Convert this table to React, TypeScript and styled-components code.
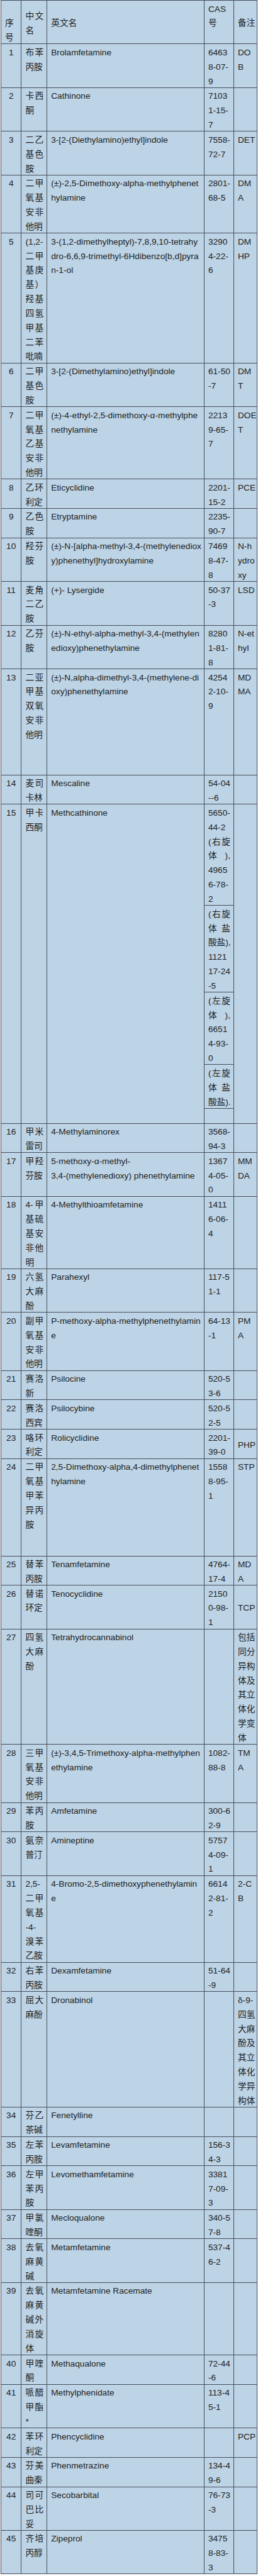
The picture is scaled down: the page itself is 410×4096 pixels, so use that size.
import React from 'react';
import styled, { createGlobalStyle } from 'styled-components';

const LINE = 22.83;

type Lines = string[];

interface IDrug {
  no: string;
  cn: Lines;
  en: Lines;
  cas?: Lines;
  casGroups?: Lines[];
  note?: Lines;
  noteMiddle?: boolean;
  casMiddle?: boolean;
  height?: number;
}

const drugs: IDrug[] = [
  { no: '1', cn: ['布苯', '丙胺'], en: ['Brolamfetamine'], cas: ['6463', '8-07-', '9'], note: ['DO', 'B'] },
  { no: '2', cn: ['卡西', '酮'], en: ['Cathinone'], cas: ['7103', '1-15-', '7'] },
  { no: '3', cn: ['二乙', '基色', '胺'], en: ['3-[2-(Diethylamino)ethyl]indole'], cas: ['7558-', '72-7'], note: ['DET'] },
  {
    no: '4',
    cn: ['二甲', '氧基', '安非', '他明'],
    en: ['(±)-2,5-Dimethoxy-alpha-methylphenet', 'hylamine'],
    cas: ['2801-', '68-5'],
    note: ['DM', 'A'],
  },
  {
    no: '5',
    cn: ['(1,2-', '二甲', '基庚', '基）', '羟基', '四氢', '甲基', '二苯', '吡喃'],
    en: ['3-(1,2-dimethylheptyl)-7,8,9,10-tetrahy', 'dro-6,6,9-trimethyl-6Hdibenzo[b,d]pyra', 'n-1-ol'],
    cas: ['3290', '4-22-', '6'],
    note: ['DM', 'HP'],
  },
  { no: '6', cn: ['二甲', '基色', '胺'], en: ['3-[2-(Dimethylamino)ethyl]indole'], cas: ['61-50', '-7'], note: ['DM', 'T'] },
  {
    no: '7',
    cn: ['二甲', '氧基', '乙基', '安非', '他明'],
    en: ['(±)-4-ethyl-2,5-dimethoxy-α-methylphe', 'nethylamine'],
    cas: ['2213', '9-65-', '7'],
    note: ['DOE', 'T'],
  },
  { no: '8', cn: ['乙环', '利定'], en: ['Eticyclidine'], cas: ['2201-', '15-2'], note: ['PCE'] },
  { no: '9', cn: ['乙色', '胺'], en: ['Etryptamine'], cas: ['2235-', '90-7'] },
  {
    no: '10',
    cn: ['羟芬', '胺'],
    en: ['(±)-N-[alpha-methyl-3,4-(methylenediox', 'y)phenethyl]hydroxylamine'],
    cas: ['7469', '8-47-', '8'],
    note: ['N-h', 'ydro', 'xy'],
  },
  { no: '11', cn: ['麦角', '二乙', '胺'], en: ['(+)- Lysergide'], cas: ['50-37', '-3'], note: ['LSD'] },
  {
    no: '12',
    cn: ['乙芬', '胺'],
    en: ['(±)-N-ethyl-alpha-methyl-3,4-(methylen', 'edioxy)phenethylamine'],
    cas: ['8280', '1-81-', '8'],
    note: ['N-et', 'hyl'],
  },
  {
    no: '13',
    cn: ['二亚', '甲基', '双氧', '安非', '他明'],
    en: ['(±)-N,alpha-dimethyl-3,4-(methylene-di', 'oxy)phenethylamine'],
    cas: ['4254', '2-10-', '9'],
    note: ['MD', 'MA'],
    height: 168.7,
  },
  { no: '14', cn: ['麦司', '卡林'], en: ['Mescaline'], cas: ['54-04', '--6'] },
  {
    no: '15',
    cn: ['甲卡', '西酮'],
    en: ['Methcathinone'],
    casGroups: [
      ['5650-', '44-2', '(右旋', '体),', '4965', '6-78-', '2'],
      ['(右旋', '体盐', '酸盐),', '1121', '17-24', '-5'],
      ['(左旋', '体),', '6651', '4-93-', '0'],
      ['(左旋', '体盐', '酸盐).'],
    ],
  },
  { no: '16', cn: ['甲米', '雷司'], en: ['4-Methylaminorex'], cas: ['3568-', '94-3'] },
  {
    no: '17',
    cn: ['甲羟', '芬胺'],
    en: ['5-methoxy-α-methyl-', '3,4-(methylenedioxy) phenethylamine'],
    cas: ['1367', '4-05-', '0'],
    note: ['MM', 'DA'],
  },
  { no: '18', cn: ['4-甲', '基硫', '基安', '非他', '明'], en: ['4-Methylthioamfetamine'], cas: ['1411', '6-06-', '4'] },
  { no: '19', cn: ['六氢', '大麻', '酚'], en: ['Parahexyl'], cas: ['117-5', '1-1'] },
  {
    no: '20',
    cn: ['副甲', '氧基', '安非', '他明'],
    en: ['P-methoxy-alpha-methylphenethylamin', 'e'],
    cas: ['64-13', '-1'],
    note: ['PM', 'A'],
  },
  { no: '21', cn: ['赛洛', '新'], en: ['Psilocine'], cas: ['520-5', '3-6'] },
  { no: '22', cn: ['赛洛', '西宾'], en: ['Psilocybine'], cas: ['520-5', '2-5'] },
  { no: '23', cn: ['咯环', '利定'], en: ['Rolicyclidine'], cas: ['2201-', '39-0'], note: ['PHP'], noteMiddle: true },
  {
    no: '24',
    cn: ['二甲', '氧基', '甲苯', '异丙', '胺'],
    en: ['2,5-Dimethoxy-alpha,4-dimethylphenet', 'hylamine'],
    cas: ['1558', '8-95-', '1'],
    note: ['STP'],
    height: 154.8,
  },
  { no: '25', cn: ['替苯', '丙胺'], en: ['Tenamfetamine'], cas: ['4764-', '17-4'], note: ['MD', 'A'] },
  { no: '26', cn: ['替诺', '环定'], en: ['Tenocyclidine'], cas: ['2150', '0-98-', '1'], note: ['TCP'], noteMiddle: true },
  {
    no: '27',
    cn: ['四氢', '大麻', '酚'],
    en: ['Tetrahydrocannabinol'],
    note: ['包括', '同分', '异构', '体及', '其立', '体化', '学变', '体'],
  },
  {
    no: '28',
    cn: ['三甲', '氧基', '安非', '他明'],
    en: ['(±)-3,4,5-Trimethoxy-alpha-methylphen', 'ethylamine'],
    cas: ['1082-', '88-8'],
    note: ['TM', 'A'],
  },
  { no: '29', cn: ['苯丙', '胺'], en: ['Amfetamine'], cas: ['300-6', '2-9'] },
  { no: '30', cn: ['氨奈', '普汀'], en: ['Amineptine'], cas: ['5757', '4-09-', '1'] },
  {
    no: '31',
    cn: ['2,5-', '二甲', '氧基', '-4-', '溴苯', '乙胺'],
    en: ['4-Bromo-2,5-dimethoxyphenethylamin', 'e'],
    cas: ['6614', '2-81-', '2'],
    note: ['2-C', 'B'],
  },
  { no: '32', cn: ['右苯', '丙胺'], en: ['Dexamfetamine'], cas: ['51-64', '-9'] },
  {
    no: '33',
    cn: ['屈大', '麻酚'],
    en: ['Dronabinol'],
    note: ['δ-9-', '四氢', '大麻', '酚及', '其立', '体化', '学异', '构体'],
  },
  { no: '34', cn: ['芬乙', '茶碱'], en: ['Fenetylline'] },
  { no: '35', cn: ['左苯', '丙胺'], en: ['Levamfetamine'], cas: ['156-3', '4-3'] },
  { no: '36', cn: ['左甲', '苯丙', '胺'], en: ['Levomethamfetamine'], cas: ['3381', '7-09-', '3'] },
  { no: '37', cn: ['甲氯', '喹酮'], en: ['Mecloqualone'], cas: ['340-5', '7-8'] },
  { no: '38', cn: ['去氧', '麻黄', '碱'], en: ['Metamfetamine'], cas: ['537-4', '6-2'] },
  { no: '39', cn: ['去氧', '麻黄', '碱外', '消旋', '体'], en: ['Metamfetamine Racemate'] },
  { no: '40', cn: ['甲喹', '酮'], en: ['Methaqualone'], cas: ['72-44', '-6'] },
  { no: '41', cn: ['哌醋', '甲酯', '*'], en: ['Methylphenidate'], cas: ['113-4', '5-1'] },
  { no: '42', cn: ['苯环', '利定'], en: ['Phencyclidine'], note: ['PCP'] },
  { no: '43', cn: ['芬美', '曲秦'], en: ['Phenmetrazine'], cas: ['134-4', '9-6'] },
  { no: '44', cn: ['司可', '巴比', '妥'], en: ['Secobarbital'], cas: ['76-73', '-3'] },
  { no: '45', cn: ['齐培', '丙醇'], en: ['Zipeprol'], cas: ['3475', '8-83-', '3'] },
];

const GlobalStyle = createGlobalStyle`
  html, body {
    margin: 0;
    padding: 0;
    background: #ffffff;
  }
`;

const Page = styled.div`
  padding: 0 1px;
  font-family: 'Liberation Sans', 'Noto Sans CJK SC', sans-serif;
  font-size: 13.7px;
  color: #1d1f22;
`;

const Table = styled.table`
  width: 408px;
  table-layout: fixed;
  border-collapse: collapse;
  background: #bdd3e6;
`;

const Row = styled.tr<{ $h?: number }>`
  height: ${(p) => (p.$h ? `${p.$h}px` : 'auto')};
`;

const Cell = styled.td<{ $center?: boolean; $valign?: string; $flush?: boolean }>`
  border: 1px solid #46505b;
  padding: ${(p) => (p.$flush ? '0' : p.$center ? '0' : '0 5px 0 6px')};
  text-align: ${(p) => (p.$center ? 'center' : 'left')};
  vertical-align: ${(p) => p.$valign || 'top'};
  overflow: visible;
`;

const HeadCell = styled(Cell).attrs({ as: 'th' })`
  font-weight: normal;
`;

const Content = styled.div`
  padding-top: 2.5px;
  margin-bottom: -2.5px;
`;

const Line = styled.div<{ $justify?: boolean }>`
  height: ${LINE}px;
  line-height: ${LINE}px;
  white-space: nowrap;
  text-align: ${(p) => (p.$justify ? 'justify' : 'inherit')};
  text-align-last: ${(p) => (p.$justify ? 'justify' : 'auto')};
`;

const SubStack = styled.div`
  display: flex;
  flex-direction: column;
`;

const SubBox = styled.div`
  padding: 0 5px 0 6px;
  border-bottom: 1px solid #46505b;
`;

const Filler = styled.div`
  height: ${LINE}px;
`;

const TextLines: React.FC<{ lines?: Lines; justify?: boolean }> = ({ lines = [], justify }) => (
  <Content>
    {lines.map((l, i) => (
      <Line key={i} $justify={justify && i < lines.length - 1}>
        {l}
      </Line>
    ))}
  </Content>
);

const DrugRow: React.FC<{ d: IDrug }> = ({ d }) => (
  <Row $h={d.height}>
    <Cell $center>
      <TextLines lines={[d.no]} />
    </Cell>
    <Cell>
      <TextLines lines={d.cn} justify />
    </Cell>
    <Cell>
      <TextLines lines={d.en} />
    </Cell>
    {d.casGroups ? (
      <Cell $flush>
        <SubStack>
          {d.casGroups.map((g, i) => (
            <SubBox key={i}>
              <TextLines lines={g} justify />
            </SubBox>
          ))}
          <Filler />
        </SubStack>
      </Cell>
    ) : (
      <Cell $valign={d.casMiddle ? 'middle' : 'top'}>
        <TextLines lines={d.cas} justify />
      </Cell>
    )}
    <Cell $valign={d.noteMiddle ? 'middle' : 'top'}>
      <TextLines lines={d.note} justify />
    </Cell>
  </Row>
);

const App: React.FC = () => {
  return (
    <Page>
      <GlobalStyle />
      <Table>
        <colgroup>
          <col style={{ width: 32.4 }} />
          <col style={{ width: 40.8 }} />
          <col style={{ width: 249.7 }} />
          <col style={{ width: 47.1 }} />
          <col />
        </colgroup>
        <thead>
          <Row>
            <HeadCell $valign="bottom">
              <TextLines lines={['序', '号']} />
            </HeadCell>
            <HeadCell $valign="middle">
              <TextLines lines={['中文', '名']} justify />
            </HeadCell>
            <HeadCell $valign="middle">
              <TextLines lines={['英文名']} />
            </HeadCell>
            <HeadCell>
              <TextLines lines={['CAS', '号', '']} />
            </HeadCell>
            <HeadCell $valign="middle">
              <TextLines lines={['备注']} />
            </HeadCell>
          </Row>
        </thead>
        <tbody>
          {drugs.map((d) => (
            <DrugRow key={d.no} d={d} />
          ))}
        </tbody>
      </Table>
    </Page>
  );
};

export default App;
